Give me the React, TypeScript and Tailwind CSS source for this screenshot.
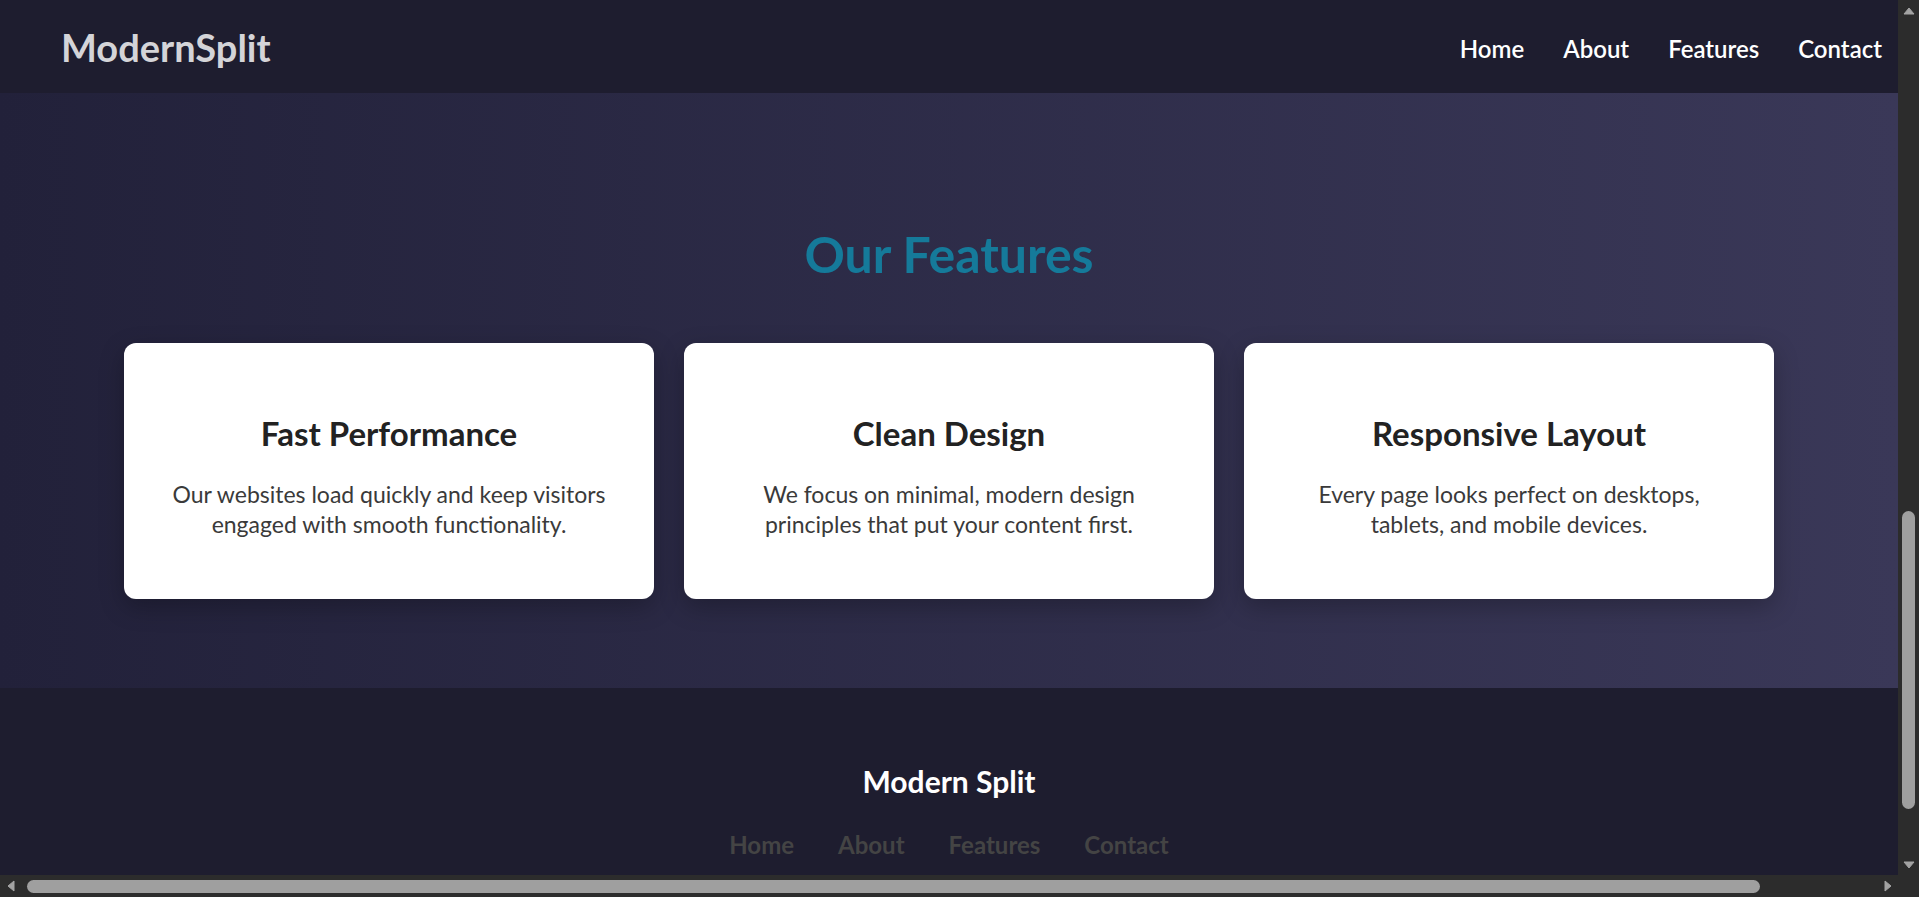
import React from "react";

const font = { fontFamily: '"Segoe UI", Lato, "Noto Sans", sans-serif' };

const navLinks = ["Home", "About", "Features", "Contact"];

const features = [
  {
    title: "Fast Performance",
    text: ["Our websites load quickly and keep visitors", "engaged with smooth functionality."],
  },
  {
    title: "Clean Design",
    text: ["We focus on minimal, modern design", "principles that put your content first."],
  },
  {
    title: "Responsive Layout",
    text: ["Every page looks perfect on desktops,", "tablets, and mobile devices."],
  },
];

const Header = () => (
  <header className="flex h-[93px] shrink-0 items-center justify-between bg-[#1e1d2f] pl-[61px] pr-[16px]">
    <h1 className="text-[38px] font-bold leading-none text-[#d4d4d8]">ModernSplit</h1>
    <nav className="flex items-center gap-[39px] pt-[4px]">
      {navLinks.map((l) => (
        <a key={l} className="text-[24px] font-semibold leading-none text-white">
          {l}
        </a>
      ))}
    </nav>
  </header>
);

const FeatureCard = ({ title, text }: { title: string; text: string[] }) => (
  <div className="flex h-[256px] w-[530px] flex-col items-center justify-center rounded-[12px] bg-white pt-[14px] shadow-[0_8px_24px_rgba(0,0,0,0.25)]">
    <h3 className="text-[33px] font-bold leading-none text-[#222222]">{title}</h3>
    <p className="mt-[29px] text-center text-[23px] leading-[30px] text-[#3a3a3a]">
      {text.map((t) => (
        <span key={t} className="block">
          {t}
        </span>
      ))}
    </p>
  </div>
);

const Features = () => (
  <section className="flex h-[595px] shrink-0 flex-col items-center bg-gradient-to-r from-[#22213a] to-[#3a3858] pt-[132px]">
    <h2 className="h-[58px] text-[50px] font-bold leading-[58px] text-[#157a9a]">Our Features</h2>
    <div className="mt-[60px] flex gap-[30px]">
      {features.map((f) => (
        <FeatureCard key={f.title} {...f} />
      ))}
    </div>
  </section>
);

const Footer = () => (
  <footer className="flex flex-1 flex-col items-center bg-[#1e1d2f] pt-[78px]">
    <h4 className="text-[30px] font-bold leading-[30px] text-white">Modern Split</h4>
    <div className="mt-[37px] flex gap-[44px]">
      {navLinks.map((l) => (
        <a key={l} className="text-[24px] font-bold leading-none text-[#444444]">
          {l}
        </a>
      ))}
    </div>
  </footer>
);

const Arrow = ({ dir }: { dir: "up" | "down" | "left" | "right" }) => {
  const pts = {
    up: "1,9 6,3 11,9",
    down: "1,3 6,9 11,3",
    left: "9,1 3,6 9,11",
    right: "3,1 9,6 3,11",
  }[dir];
  return (
    <svg width="12" height="12" viewBox="0 0 12 12">
      <polygon points={pts} fill="#a3a3a3" strokeLinejoin="round" stroke="#a3a3a3" strokeWidth="1" />
    </svg>
  );
};

const VScroll = () => (
  <div className="flex w-[21px] shrink-0 flex-col items-center bg-[#2c2c2c]">
    <div className="flex h-[21px] items-center justify-center">
      <Arrow dir="up" />
    </div>
    <div className="flex flex-1 flex-col items-center pt-[490px]">
      <div className="h-[298px] w-[13px] rounded-full bg-[#9f9f9f]" />
    </div>
    <div className="flex h-[21px] items-center justify-center">
      <Arrow dir="down" />
    </div>
  </div>
);

const HScroll = () => (
  <div className="flex h-[22px] shrink-0 bg-[#2c2c2c]">
    <div className="flex flex-1 items-center">
      <div className="flex w-[21px] items-center justify-center">
        <Arrow dir="left" />
      </div>
      <div className="ml-[6px] h-[13px] w-[1733px] rounded-full bg-[#9f9f9f]" />
      <div className="flex-1" />
      <div className="flex w-[21px] items-center justify-center">
        <Arrow dir="right" />
      </div>
    </div>
    <div className="w-[21px] bg-[#2c2c2c]" />
  </div>
);

export default function App() {
  return (
    <div className="flex h-screen w-full flex-col overflow-hidden bg-[#1e1d2f]" style={font}>
      <div className="flex min-h-0 flex-1">
        <div className="flex min-w-0 flex-1 flex-col overflow-hidden">
          <Header />
          <Features />
          <Footer />
        </div>
        <VScroll />
      </div>
      <HScroll />
    </div>
  );
}
